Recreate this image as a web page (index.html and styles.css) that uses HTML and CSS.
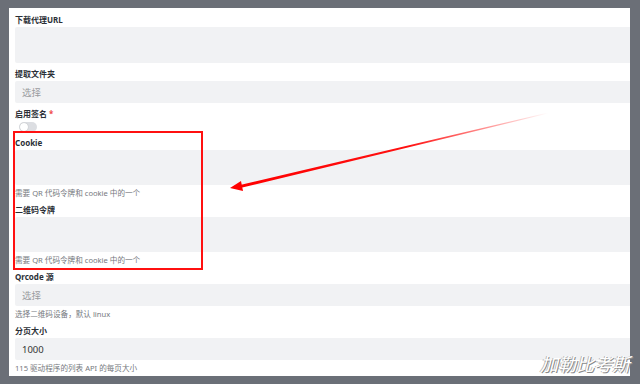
FILE: index.html
```html
<!DOCTYPE html>
<html>
<head>
    <meta charset="utf-8">
    <title>115 驱动设置</title>
    <link rel="stylesheet" href="styles.css">
</head>
<body>
    <div class="panel">
        <div class="field">
            <label class="field-label">下载代理URL</label>
            <textarea class="text-area tall"></textarea>
        </div>

        <div class="field">
            <label class="field-label">提取文件夹</label>
            <input class="text-input" placeholder="选择">
        </div>

        <div class="field">
            <label class="field-label">启用签名 <span class="required">*</span></label>
            <div class="switch"><span class="knob"></span></div>
        </div>

        <div class="field">
            <label class="field-label">Cookie</label>
            <textarea class="text-area"></textarea>
            <div class="help">需要 QR 代码令牌和 cookie 中的一个</div>
        </div>

        <div class="field">
            <label class="field-label">二维码令牌</label>
            <textarea class="text-area"></textarea>
            <div class="help">需要 QR 代码令牌和 cookie 中的一个</div>
        </div>

        <div class="field">
            <label class="field-label">Qrcode 源</label>
            <input class="text-input" placeholder="选择">
            <div class="help">选择二维码设备，默认 linux</div>
        </div>

        <div class="field">
            <label class="field-label">分页大小</label>
            <input class="text-input" value="1000">
            <div class="help">115 驱动程序的列表 API 的每页大小</div>
        </div>
    </div>

    <!-- annotation drawn over the screenshot -->
    <div class="mark-box"></div>
    <svg class="mark-arrow" width="640" height="384" viewBox="0 0 640 384">
        <defs>
            <linearGradient id="fade" gradientUnits="userSpaceOnUse" x1="236" y1="186" x2="548" y2="113">
                <stop offset="0" stop-color="#ff0000"/>
                <stop offset="0.55" stop-color="#ff1010"/>
                <stop offset="1" stop-color="#ff0000" stop-opacity="0"/>
            </linearGradient>
        </defs>
        <polygon points="238,185.5 548,112.5 548,113.5 238,188.5" fill="url(#fade)"/>
        <polygon points="230,188 241,181 243,191" fill="#ff0000"/>
    </svg>

    <div class="watermark">加勒比考斯</div>
</body>
</html>
```

FILE: styles.css
```css
body {
    margin: 0;
    padding: 8px 10px 8px 9px;
    background-color: #6b6f77;
    font-family: "Noto Sans", "Noto Sans CJK SC", sans-serif;
    height: 384px;
    box-sizing: border-box;
    overflow: hidden;
    position: relative;
}

.panel {
    background-color: #fff;
    height: 100%;
    box-sizing: border-box;
    padding: 6px 0 0 6px;
    display: flex;
    flex-direction: column;
    gap: 5px;
}

.field {
    display: flex;
    flex-direction: column;
    align-items: flex-start;
}

.field-label {
    font-size: 8px;
    line-height: 12px;
    font-weight: bold;
    color: #2b2f36;
    margin-bottom: 1px;
}

.required {
    color: #f04545;
}

.text-area,
.text-input {
    width: 100%;
    box-sizing: border-box;
    border: none;
    border-radius: 2px 0 0 2px;
    background-color: #f1f2f4;
    font-family: "Noto Sans", "Noto Sans CJK SC", sans-serif;
    font-size: 9.5px;
    color: #333;
    padding: 0 7px;
    margin: 0;
    outline: none;
    display: block;
}

.text-area {
    height: 35px;
    resize: none;
}

.text-area.tall {
    height: 36px;
}

.text-input {
    height: 22px;
}

.text-input::placeholder {
    color: #9a9ca0;
}

.help {
    font-size: 7.6px;
    line-height: 12px;
    color: #76797e;
    margin-top: 2px;
}

.switch {
    width: 18px;
    height: 10px;
    margin: 1px 0 0 4px;
    border-radius: 5px;
    background-color: #dcdee2;
    position: relative;
}

.knob {
    position: absolute;
    top: 1px;
    left: 1px;
    width: 8px;
    height: 8px;
    border-radius: 50%;
    background-color: #fff;
    box-shadow: 0 0 1px rgba(0, 0, 0, 0.3);
}

.mark-box {
    position: absolute;
    left: 13px;
    top: 131px;
    width: 190px;
    height: 139px;
    box-sizing: border-box;
    border: 2px solid #ff1010;
}

.mark-arrow {
    position: absolute;
    left: 0;
    top: 0;
}

.watermark {
    position: absolute;
    right: 10px;
    bottom: 11px;
    font-family: "Noto Sans CJK SC", sans-serif;
    font-size: 18px;
    line-height: 20px;
    color: #fff;
    font-style: italic;
    text-shadow: 1px 1px 0 #8a8a8a, -1px 0 0 #b8b8b8;
}
```
